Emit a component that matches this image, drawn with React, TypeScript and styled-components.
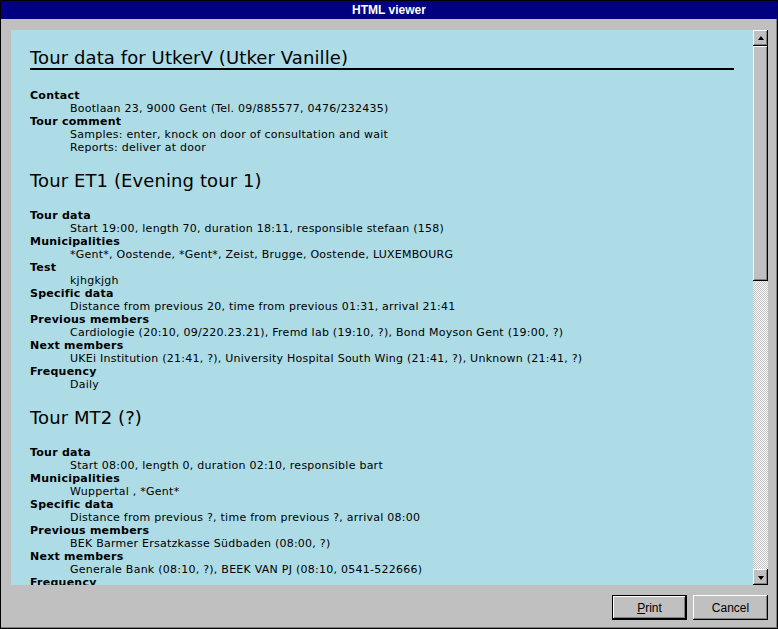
import React from "react";
import styled, { createGlobalStyle } from "styled-components";

const Global = createGlobalStyle`
  html, body { margin: 0; padding: 0; background: #c0c0c0; }
  * { box-sizing: border-box; }
`;

const Window = styled.div`
  width: 778px;
  height: 629px;
  background: #c0c0c0;
  border: 1px solid #000;
  box-shadow: inset -1px -1px 0 #808080;
  display: flex;
  flex-direction: column;
  overflow: hidden;
`;

const TitleBar = styled.div`
  height: 18px;
  background: #000080;
  color: #fff;
  font-family: "Liberation Sans", Arial, sans-serif;
  font-weight: bold;
  font-size: 12px;
  display: flex;
  align-items: center;
  justify-content: center;
  flex: none;
`;

const Body = styled.div`
  flex: 1;
  display: flex;
  flex-direction: column;
  padding: 11px 9px 7px 10px;
  min-height: 0;
`;

const ContentFrame = styled.div`
  height: 555px;
  display: flex;
  flex: none;
`;

const Viewport = styled.div`
  flex: 1;
  background: #addce6;
  overflow: hidden;
  padding: 18px 19px 0 19px;
  font-family: "DejaVu Sans", Verdana, sans-serif;
  font-size: 11px;
  letter-spacing: 0.25px;
  line-height: 13px;
  color: #000;
`;

const Heading = styled.h2<{ $underline?: boolean }>`
  margin: ${(p) => (p.$underline ? "0 0 19px" : "17px 0 18px")};
  font-weight: normal;
  font-size: 18px;
  letter-spacing: 0.1px;
  line-height: 20px;
  border-bottom: ${(p) => (p.$underline ? "2px solid #000" : "none")};
`;

const List = styled.dl`
  margin: 0;
`;

const Term = styled.dt`
  font-weight: bold;
`;

const Detail = styled.dd`
  margin: 0 0 0 40px;
`;

const ScrollBar = styled.div`
  width: 15px;
  display: flex;
  flex-direction: column;
  flex: none;
  background-color: #c0c0c0;
`;

const ScrollButton = styled.div`
  height: 16px;
  flex: none;
  background: #c0c0c0;
  box-shadow: inset -1px -1px 0 #000, inset 1px 1px 0 #fff, inset -2px -2px 0 #808080;
  display: flex;
  align-items: center;
  justify-content: center;
`;

const Arrow = styled.span<{ $dir: "up" | "down" }>`
  width: 0;
  height: 0;
  border-left: 3px solid transparent;
  border-right: 3px solid transparent;
  ${(p) =>
    p.$dir === "up"
      ? "border-bottom: 4px solid #000; margin-top: -1px;"
      : "border-top: 4px solid #000; margin-top: 1px;"}
`;

const Thumb = styled.div`
  height: 235px;
  flex: none;
  background: #c0c0c0;
  box-shadow: inset -1px -1px 0 #000, inset 1px 1px 0 #fff, inset -2px -2px 0 #808080;
`;

const Track = styled.div`
  flex: 1;
  background-color: #c0c0c0;
  background-image: conic-gradient(#fff 25%, #c0c0c0 0 50%, #fff 0 75%, #c0c0c0 0);
  background-size: 2px 2px;
`;

const Footer = styled.div`
  margin-top: 10px;
  display: flex;
  justify-content: flex-end;
  gap: 6px;
`;

const Button = styled.button<{ $default?: boolean }>`
  width: 75px;
  height: 25px;
  padding: 0;
  background: #c0c0c0;
  font-family: "Liberation Sans", Arial, sans-serif;
  font-size: 12px;
  color: #000;
  border: ${(p) => (p.$default ? "1px solid #000" : "none")};
  box-shadow: inset -1px -1px 0 #000, inset 1px 1px 0 #fff, inset -2px -2px 0 #808080;
  cursor: default;
`;

const Mnemonic = styled.span`
  text-decoration: underline;
`;

type Entry = { term: string; lines: string[] };

const contact: Entry[] = [
  { term: "Contact", lines: ["Bootlaan 23, 9000 Gent (Tel. 09/885577, 0476/232435)"] },
  {
    term: "Tour comment",
    lines: ["Samples: enter, knock on door of consultation and wait", "Reports: deliver at door"],
  },
];

const et1: Entry[] = [
  { term: "Tour data", lines: ["Start 19:00, length 70, duration 18:11, responsible stefaan (158)"] },
  { term: "Municipalities", lines: ["*Gent*, Oostende, *Gent*, Zeist, Brugge, Oostende, LUXEMBOURG"] },
  { term: "Test", lines: ["kjhgkjgh"] },
  { term: "Specific data", lines: ["Distance from previous 20, time from previous 01:31, arrival 21:41"] },
  {
    term: "Previous members",
    lines: ["Cardiologie (20:10, 09/220.23.21), Fremd lab (19:10, ?), Bond Moyson Gent (19:00, ?)"],
  },
  {
    term: "Next members",
    lines: ["UKEi Institution (21:41, ?), University Hospital South Wing (21:41, ?), Unknown (21:41, ?)"],
  },
  { term: "Frequency", lines: ["Daily"] },
];

const mt2: Entry[] = [
  { term: "Tour data", lines: ["Start 08:00, length 0, duration 02:10, responsible bart"] },
  { term: "Municipalities", lines: ["Wuppertal , *Gent*"] },
  { term: "Specific data", lines: ["Distance from previous ?, time from previous ?, arrival 08:00"] },
  { term: "Previous members", lines: ["BEK Barmer Ersatzkasse Südbaden (08:00, ?)"] },
  { term: "Next members", lines: ["Generale Bank (08:10, ?), BEEK VAN PJ (08:10, 0541-522666)"] },
  { term: "Frequency", lines: ["Daily"] },
];

const Entries = ({ items }: { items: Entry[] }) => (
  <List>
    {items.map((e, i) => (
      <React.Fragment key={i}>
        <Term>{e.term}</Term>
        {e.lines.map((l, j) => (
          <Detail key={j}>{l}</Detail>
        ))}
      </React.Fragment>
    ))}
  </List>
);

export default function App() {
  return (
    <>
      <Global />
      <Window>
        <TitleBar>HTML viewer</TitleBar>
        <Body>
          <ContentFrame>
            <Viewport>
              <Heading $underline>Tour data for UtkerV (Utker Vanille)</Heading>
              <Entries items={contact} />
              <Heading>Tour ET1 (Evening tour 1)</Heading>
              <Entries items={et1} />
              <Heading>Tour MT2 (?)</Heading>
              <Entries items={mt2} />
            </Viewport>
            <ScrollBar>
              <ScrollButton>
                <Arrow $dir="up" />
              </ScrollButton>
              <Thumb />
              <Track />
              <ScrollButton>
                <Arrow $dir="down" />
              </ScrollButton>
            </ScrollBar>
          </ContentFrame>
          <Footer>
            <Button $default>
              <Mnemonic>P</Mnemonic>rint
            </Button>
            <Button>Cancel</Button>
          </Footer>
        </Body>
      </Window>
    </>
  );
}
